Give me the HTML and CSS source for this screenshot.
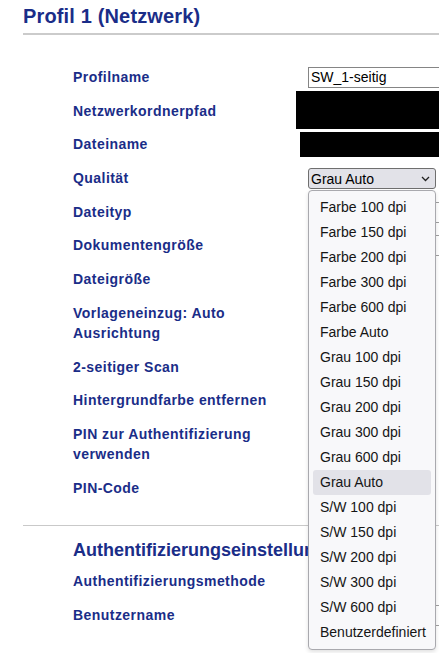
FILE: index.html
```html
<!DOCTYPE html>
<html lang="de">
<head>
<meta charset="utf-8">
<title>Profil 1 (Netzwerk)</title>
<link rel="stylesheet" href="styles.css">
</head>
<body>
<h1 class="page-title">Profil 1 (Netzwerk)</h1>

<div class="form">
  <div class="row">
    <div class="label">Profilname</div>
    <div class="control"><div class="text-input">SW_1-seitig</div></div>
  </div>
  <div class="row">
    <div class="label">Netzwerkordnerpfad</div>
    <div class="control"></div>
    <div class="redact redact-path"></div>
  </div>
  <div class="row">
    <div class="label">Dateiname</div>
    <div class="control"></div>
    <div class="redact redact-file"></div>
  </div>
  <div class="row row-top">
    <div class="label">Qualität</div>
    <div class="control">
      <div class="select-wrap">
        <div class="select open">
          <span>Grau Auto</span>
          <svg class="chevron" width="9" height="6" viewBox="0 0 9 6"><path d="M1 1 L4.5 4.5 L8 1" fill="none" stroke="#222" stroke-width="1.3"/></svg>
        </div>
        <ul class="listbox">
          <li>Farbe 100 dpi</li>
          <li>Farbe 150 dpi</li>
          <li>Farbe 200 dpi</li>
          <li>Farbe 300 dpi</li>
          <li>Farbe 600 dpi</li>
          <li>Farbe Auto</li>
          <li>Grau 100 dpi</li>
          <li>Grau 150 dpi</li>
          <li>Grau 200 dpi</li>
          <li>Grau 300 dpi</li>
          <li>Grau 600 dpi</li>
          <li class="selected">Grau Auto</li>
          <li>S/W 100 dpi</li>
          <li>S/W 150 dpi</li>
          <li>S/W 200 dpi</li>
          <li>S/W 300 dpi</li>
          <li>S/W 600 dpi</li>
          <li>Benutzerdefiniert</li>
        </ul>
      </div>
    </div>
  </div>
  <div class="row">
    <div class="label">Dateityp</div>
    <div class="control"><div class="box-input"></div></div>
  </div>
  <div class="row">
    <div class="label">Dokumentengröße</div>
    <div class="control"><div class="box-input"></div></div>
  </div>
  <div class="row">
    <div class="label">Dateigröße</div>
    <div class="control"></div>
  </div>
  <div class="row">
    <div class="label">Vorlageneinzug: Auto Ausrichtung</div>
    <div class="control"></div>
  </div>
  <div class="row">
    <div class="label">2-seitiger Scan</div>
    <div class="control"></div>
  </div>
  <div class="row">
    <div class="label">Hintergrundfarbe entfernen</div>
    <div class="control"></div>
  </div>
  <div class="row">
    <div class="label">PIN zur Authentifizierung verwenden</div>
    <div class="control"></div>
  </div>
  <div class="row">
    <div class="label">PIN-Code</div>
    <div class="control"></div>
  </div>
</div>

<hr class="divider">

<h2 class="section-title">Authentifizierungseinstellungen</h2>
<div class="form form-auth">
  <div class="row">
    <div class="label">Authentifizierungsmethode</div>
    <div class="control"></div>
  </div>
  <div class="row">
    <div class="label">Benutzername</div>
    <div class="control"><div class="box-input"></div></div>
  </div>
</div>
</body>
</html>
```

FILE: styles.css
```css
html {
  overflow: hidden;
}

body {
  box-sizing: border-box;
  min-height: 653px;
  margin: 0;
  background: #ffffff;
  font-family: "Liberation Sans", Arial, sans-serif;
  color: #1a2e86;
}

.page-title {
  margin: 5px 0 0 23px;
  padding-bottom: 5px;
  border-bottom: 2px solid #cbcbcb;
  font-size: 20px;
  line-height: 23px;
  font-weight: bold;
  letter-spacing: 0.15px;
  color: #1a2d88;
}

.form {
  display: flex;
  flex-direction: column;
  gap: 13.7px;
  padding: 32px 0 0 73px;
}

.form-auth {
  padding-top: 10.5px;
}

.row {
  position: relative;
  display: flex;
  align-items: flex-start;
}

.row-top {
  z-index: 2;
}

.label {
  flex: none;
  width: 224px;
  margin-right: 11px;
  font-size: 14px;
  line-height: 20px;
  font-weight: bold;
  letter-spacing: 0.45px;
  color: #1a2d88;
}

.control {
  flex: none;
  height: 20px;
}

.text-input {
  box-sizing: border-box;
  width: 150px;
  height: 21px;
  padding: 0 2px;
  border: 1px solid #858585;
  font-size: 14px;
  line-height: 19px;
  color: #000;
  background: #fff;
}

.box-input {
  box-sizing: border-box;
  width: 150px;
  height: 21px;
  border: 1px solid #a0a0a0;
  background: #fff;
}

.redact {
  position: absolute;
  background: #000;
  width: 160px;
}

.redact-path {
  left: 223px;
  top: -10px;
  height: 38px;
}

.redact-file {
  left: 227px;
  top: -2px;
  height: 25px;
}

.select-wrap {
  position: relative;
}

.select {
  box-sizing: border-box;
  display: flex;
  align-items: center;
  justify-content: space-between;
  width: 128px;
  height: 21px;
  padding: 0 5px 0 2px;
  border: 1px solid #6f6f6f;
  border-radius: 3px;
  background: #e2e2e8;
  font-size: 14px;
  color: #000;
}

.chevron {
  display: block;
}

.listbox {
  position: absolute;
  top: 22px;
  left: 0;
  box-sizing: border-box;
  width: 128px;
  margin: 0;
  padding: 4px;
  list-style: none;
  background: #f8f8fa;
  border: 1px solid #a9a9ae;
  border-radius: 4px;
  box-shadow: 0 2px 4px rgba(0, 0, 0, 0.12);
}

.listbox li {
  height: 25px;
  padding-left: 7px;
  font-size: 14px;
  line-height: 25px;
  color: #151515;
  white-space: nowrap;
  border-radius: 3px;
}

.listbox li.selected {
  background: #e2e2e8;
}

.divider {
  margin: 27px 0 0 23px;
  border: 0;
  border-top: 1px solid #c9c9c9;
  height: 0;
}

.section-title {
  margin: 14px 0 0 73px;
  font-size: 18px;
  line-height: 21px;
  font-weight: bold;
  white-space: nowrap;
  color: #1a2d88;
}
```
